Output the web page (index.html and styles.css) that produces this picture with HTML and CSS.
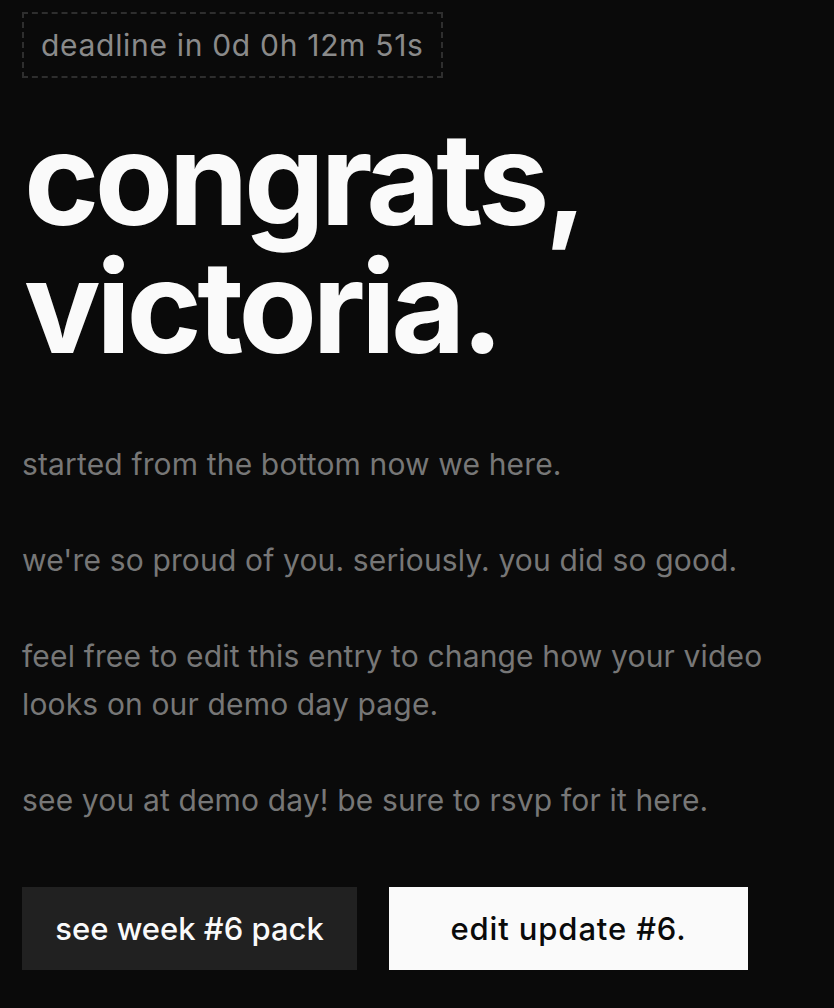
FILE: index.html
```html
<!DOCTYPE html>
<html lang="en">
<head>
<meta charset="utf-8">
<title>congrats</title>
<link rel="stylesheet" href="styles.css">
</head>
<body>
<main class="page">
  <div class="deadline">deadline in 0d 0h 12m 51s</div>
  <h1 class="title">congrats,<br>victoria.</h1>
  <div class="copy">
    <p>started from the bottom now we here.</p>
    <p>we're so proud of you. seriously. you did so good.</p>
    <p>feel free to edit this entry to change how your video looks on our demo day page.</p>
    <p>see you at demo day! be sure to rsvp for it here.</p>
  </div>
  <div class="actions">
    <a class="btn btn-dark" href="#">see week #6 pack</a>
    <a class="btn btn-light" href="#">edit update #6.</a>
  </div>
</main>
</body>
</html>
```

FILE: styles.css
```css
html, body {
  margin: 0;
  padding: 0;
  background: #0a0a0a;
}
body {
  font-family: "Inter", "Noto Sans", sans-serif;
  color: #fafafa;
}
.page {
  padding: 12px 22px 0 22px;
  display: flex;
  flex-direction: column;
  align-items: flex-start;
}
.deadline {
  border: 2px dashed #2e2e2e;
  padding: 0 17px;
  height: 62px;
  display: flex;
  align-items: center;
  font-size: 30px;
  color: #8a8a8a;
  letter-spacing: 0.023em;
}
.title {
  margin: 37px 0 0 2px;
  font-size: 128px;
  line-height: 128px;
  font-weight: 700;
  letter-spacing: -0.035em;
  color: #fafafa;
}
.copy {
  margin-top: 69px;
  width: 790px;
}
.copy p {
  margin: 0 0 48px 0;
  font-size: 30px;
  line-height: 48px;
  color: #777777;
  letter-spacing: 0.005em;
}
.copy p:last-child {
  margin-bottom: 0;
}
.actions {
  margin-top: 63px;
  display: flex;
  gap: 32px;
}
.btn {
  display: flex;
  align-items: center;
  justify-content: center;
  height: 83px;
  font-size: 31px;
  font-weight: 500;
  text-decoration: none;
}
.btn-dark {
  width: 335px;
  background: #212121;
  color: #fafafa;
  letter-spacing: 0;
}
.btn-light {
  width: 359px;
  background: #fafafa;
  color: #0a0a0a;
  letter-spacing: 0.028em;
}
```
